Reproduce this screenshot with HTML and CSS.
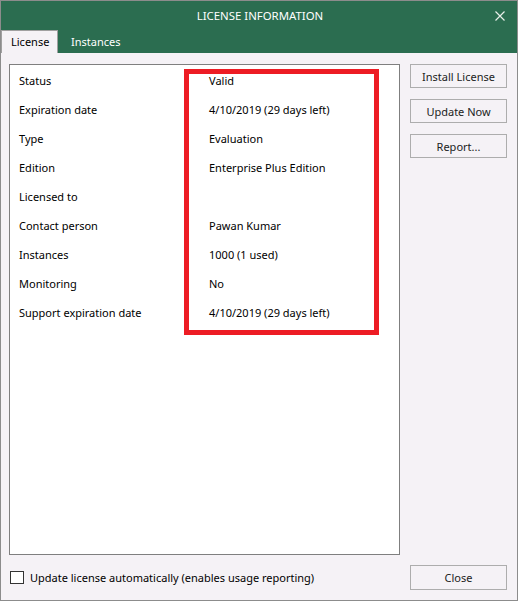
FILE: index.html
```html
<!DOCTYPE html>
<html>
<head>
    <title>License Information</title>
    <link rel="stylesheet" href="styles.css">
</head>
<body>
    <div class="window">
        <div class="titlebar">
            <span class="title">LICENSE INFORMATION</span>
            <svg class="close-x" width="10" height="10" viewBox="0 0 10 10">
                <path d="M0.5 0.5L9.5 9.5M9.5 0.5L0.5 9.5" stroke="#e8efe9" stroke-width="1.2" fill="none"/>
            </svg>
        </div>
        <div class="tabs">
            <div class="tab active">License</div>
            <div class="tab">Instances</div>
        </div>

        <div class="content">
            <div class="panel">
                <div class="row"><span class="label">Status</span><span class="value">Valid</span></div>
                <div class="row"><span class="label">Expiration date</span><span class="value">4/10/2019 (29 days left)</span></div>
                <div class="row"><span class="label">Type</span><span class="value">Evaluation</span></div>
                <div class="row"><span class="label">Edition</span><span class="value">Enterprise Plus Edition</span></div>
                <div class="row"><span class="label">Licensed to</span><span class="value"></span></div>
                <div class="row"><span class="label">Contact person</span><span class="value">Pawan Kumar</span></div>
                <div class="row"><span class="label">Instances</span><span class="value">1000 (1 used)</span></div>
                <div class="row"><span class="label">Monitoring</span><span class="value">No</span></div>
                <div class="row"><span class="label">Support expiration date</span><span class="value">4/10/2019 (29 days left)</span></div>
                <div class="highlight"></div>
            </div>
            <div class="actions">
                <button>Install License</button>
                <button>Update Now</button>
                <button>Report...</button>
            </div>
        </div>

        <div class="footer">
            <label class="auto-update">
                <span class="checkbox"></span>
                Update license automatically (enables usage reporting)
            </label>
            <button class="close-btn">Close</button>
        </div>
    </div>
</body>
</html>
```

FILE: styles.css
```css
:root {
    --green: #2b6d50;
    --dialog-bg: #f5f2f6;
    --border: #7f7f7f;
    --button-border: #adadad;
}

* {
    box-sizing: border-box;
    margin: 0;
    padding: 0;
}

body {
    font-family: 'Noto Sans', 'Open Sans', sans-serif;
    font-size: 11px;
    color: #000;
    background: #fff;
}

.window {
    width: 518px;
    height: 601px;
    border: 1px solid #8c8c8c;
    background: var(--dialog-bg);
    display: flex;
    flex-direction: column;
}

.titlebar {
    height: 29px;
    background: var(--green);
    color: #fff;
    display: flex;
    align-items: center;
    justify-content: center;
    position: relative;
}

.title {
    font-size: 11.4px;
    padding-left: 2px;
}

.close-x {
    position: absolute;
    right: 12px;
    top: 10px;
}

.tabs {
    height: 23px;
    background: var(--green);
    display: flex;
    align-items: flex-end;
}

.tab {
    height: 23px;
    line-height: 23px;
    color: #fff;
    padding: 0 9px 0 13px;
}

.tab.active {
    width: 57px;
    background: var(--dialog-bg);
    color: #000;
    border: 1px solid #a0a0a0;
    border-bottom: none;
    padding-left: 9px;
    line-height: 22px;
}

.content {
    display: flex;
    gap: 10px;
    padding: 11px 10px 0 8px;
}

.panel {
    width: 392px;
    height: 491px;
    background: #fff;
    border: 1px solid var(--border);
    padding: 1px 0 0 9px;
    position: relative;
}

.row {
    display: flex;
    height: 29px;
    line-height: 29px;
}

.label {
    width: 190px;
}

.highlight {
    position: absolute;
    left: 174px;
    top: 4px;
    width: 195px;
    height: 266px;
    border: 5px solid #ed1c24;
}

.actions {
    display: flex;
    flex-direction: column;
    gap: 11px;
}

button {
    width: 97px;
    height: 24px;
    font-family: inherit;
    font-size: 11px;
    color: #222;
    background: var(--dialog-bg);
    border: 1px solid var(--button-border);
}

.footer {
    display: flex;
    align-items: center;
    justify-content: space-between;
    padding: 10px 10px 0 9px;
}

.auto-update {
    display: flex;
    align-items: center;
    gap: 6px;
}

.checkbox {
    width: 14px;
    height: 13px;
    border: 1px solid #333;
    background: #fff;
}

.close-btn {
    height: 25px;
}
```
